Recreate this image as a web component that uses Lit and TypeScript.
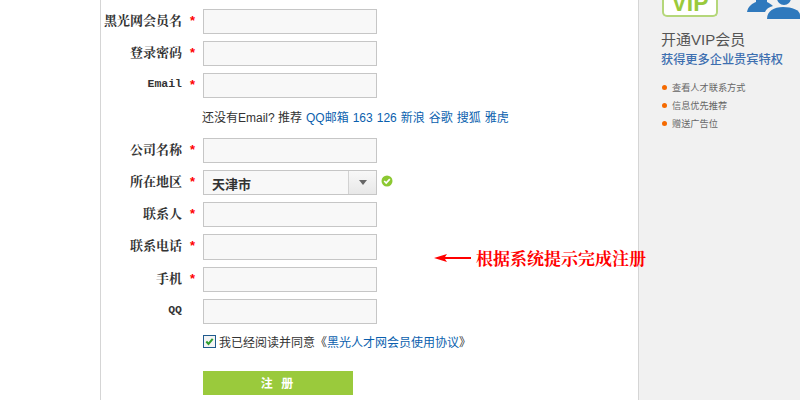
import { LitElement, html, css } from "lit";
import { customElement } from "lit/decorators.js";

const rows1 = [
  { label: "黑光网会员名", req: true },
  { label: "登录密码", req: true },
  { label: "Email", req: true },
];
const rows2 = [
  { label: "联系人", req: true },
  { label: "联系电话", req: true, tall: true },
  { label: "手机", req: true },
  { label: "QQ", req: false },
];
const mails = ["QQ邮箱", "163", "126", "新浪", "谷歌", "搜狐", "雅虎"];
const perks = ["查看人才联系方式", "信息优先推荐", "赠送广告位"];

@customElement("app-root")
export class AppRoot extends LitElement {
  static styles = css`
    :host { display: block; width: 800px; height: 400px; overflow: hidden; background: #fff;
      font-family: "Liberation Sans", "Noto Sans CJK SC", sans-serif; font-size: 12px; color: #333; }
    .page { display: flex; height: 400px; padding-left: 100px; box-sizing: border-box; }
    .main { width: 538px; border-left: 1px solid #d5d5d5; box-sizing: border-box; position: relative; padding-top: 9px; flex: none; }
    .side { flex: 1; background: #f1f1f1; border-left: 1px solid #d5d5d5; padding-left: 23px; overflow: hidden; }
    .row { display: flex; align-items: flex-start; height: 32px; }
    .row.tall { height: 33px; }
    .row.tall .input { height: 26px; }
    .label { width: 81px; text-align: right; font-weight: 700; font-size: 13px; line-height: 22px; color: #333;
      font-family: "Noto Serif CJK SC", "Noto Sans CJK SC", serif; white-space: nowrap; }
    .latin { font-family: "Liberation Mono", monospace; font-size: 11.5px; }
    .star { width: 21px; text-align: center; color: #f00; font-weight: 700; font-size: 13px; line-height: 24px; flex: none; }
    .input { width: 174px; height: 25px; box-sizing: border-box; border: 1px solid #c6c6c6; background: #f8f8f8; flex: none; }
    .hint { display: flex; height: 33px; padding: 5px 0 0 101px; box-sizing: border-box; gap: 4px; align-items: flex-start; line-height: 17px; white-space: nowrap; font-size: 12px; }
    .hint a, .agree a { color: #0a5fae; text-decoration: none; }
    .select { display: flex; width: 174px; height: 25px; box-sizing: border-box; border: 1px solid #c6c6c6; background: #f8f8f8; flex: none; }
    .value { flex: 1; padding-left: 8px; font-weight: 700; font-size: 13px; line-height: 26px; color: #333; font-family: "Noto Sans CJK SC", sans-serif; }
    .arrow { width: 27px; border-left: 1px solid #d2d2d2; background: linear-gradient(#f8f8f8, #e8e8e8); display: flex; align-items: center; justify-content: center; }
    .tri { width: 0; height: 0; border: 4px solid transparent; border-top: 5px solid #666; border-bottom: 0; }
    .ok { margin: 5px 0 0 4px; flex: none; display: block; }
    .agree { display: flex; align-items: center; gap: 3px; height: 17px; margin: 2px 0 0 102px; white-space: nowrap; }
    .check { width: 13px; height: 13px; box-sizing: border-box; border: 1px solid #1f5a8e; background: #f4f4f4; display: block; flex: none; }
    .submit { margin: 21px 0 0 102px; width: 150px; height: 24px; padding-right: 2px; box-sizing: border-box; background: #9aca3c; color: #fff; font-weight: 700; font-size: 12px; line-height: 24px; text-align: center; font-family: "Noto Sans CJK SC", sans-serif; word-spacing: 6px; }
    .note { position: absolute; left: 333px; top: 247px; display: flex; align-items: center; gap: 4px; color: #f00; font-weight: 700; font-size: 17px; line-height: 22px; font-family: "Noto Serif CJK SC", "Noto Sans CJK SC", serif; white-space: nowrap; }
    .logos { display: flex; align-items: flex-start; height: 17px; position: relative; }
    .vip { width: 56px; height: 17px; box-sizing: border-box; border: 2px solid #b5d77a; border-top: 0; border-radius: 0 0 5px 5px; background: #fff; overflow: hidden; color: #9aca3c; font-weight: 700; font-size: 23px; line-height: 6px; text-align: center; }
    .people { margin-left: 29px; display: block; flex: none; }
    .title { margin: 13px 0 0 -1px; font-size: 15px; line-height: 20px; color: #555; }
    .sub { font-size: 12.2px; font-weight: 500; line-height: 20px; color: #3d6fb0; white-space: nowrap; margin-left: -1px; }
    ul { list-style: none; padding: 0; margin: 8px 0 0; }
    li { display: flex; align-items: center; gap: 5px; height: 18px; font-size: 9.2px; color: #666; white-space: nowrap; }
    .dot { width: 5px; height: 5px; border-radius: 50%; background: #f56a00; flex: none; }
  `;

  private row(r: { label: string; req: boolean; tall?: boolean }) {
    return html`<div class="row ${r.tall ? "tall" : ""}">
      <div class="label ${/^[A-Za-z]+$/.test(r.label) ? "latin" : ""}">${r.label}</div>
      <div class="star">${r.req ? "*" : ""}</div>
      <div class="input"></div>
    </div>`;
  }

  render() {
    return html`<div class="page">
      <div class="main">
        ${rows1.map((r) => this.row(r))}
        <div class="hint"><span>还没有Email? 推荐</span>${mails.map((m) => html`<a>${m}</a>`)}</div>
        ${this.row({ label: "公司名称", req: true })}
        <div class="row">
          <div class="label">所在地区</div><div class="star">*</div>
          <div class="select"><div class="value">天津市</div><div class="arrow"><div class="tri"></div></div></div>
          <svg class="ok" width="12" height="12" viewBox="0 0 12 12"><circle cx="6" cy="6" r="5.5" fill="#8cc832"/><path d="M3.2 6l2 2 3.6-3.8" fill="none" stroke="#fff" stroke-width="1.7"/></svg>
        </div>
        ${rows2.map((r) => this.row(r))}
        <div class="agree">
          <svg class="check" viewBox="0 0 11 11"><path d="M2.3 5.5l2.2 2.4 4.2-5" fill="none" stroke="#2f9e2f" stroke-width="2"/></svg>
          <span>我已经阅读并同意《<a>黑光人才网会员使用协议</a>》</span>
        </div>
        <div class="submit">注 册</div>
        <div class="note">
          <svg width="38" height="10" viewBox="0 0 38 10"><path d="M0 5L13 1 11 4H37V6H11L13 9Z" fill="#f00"/></svg>
          <span>根据系统提示完成注册</span>
        </div>
      </div>
      <div class="side">
        <div class="logos">
          <div class="vip">VIP</div>
          <svg class="people" width="53" height="20" viewBox="0 0 53 20"><g fill="#2f79bd"><path d="M0 12C1 6 6 3 9 2V0H20V2C22 3 24 4 26 6 22 7 19 9 18 12Z"/><circle cx="37" cy="-2" r="7"/><path d="M20 19C20 11 27 7 36 7S53 10 53 15V19Z"/></g></svg>
        </div>
        <div class="title">开通VIP会员</div>
        <div class="sub">获得更多企业贵宾特权</div>
        <ul>${perks.map((p) => html`<li><span class="dot"></span>${p}</li>`)}</ul>
      </div>
    </div>`;
  }
}
